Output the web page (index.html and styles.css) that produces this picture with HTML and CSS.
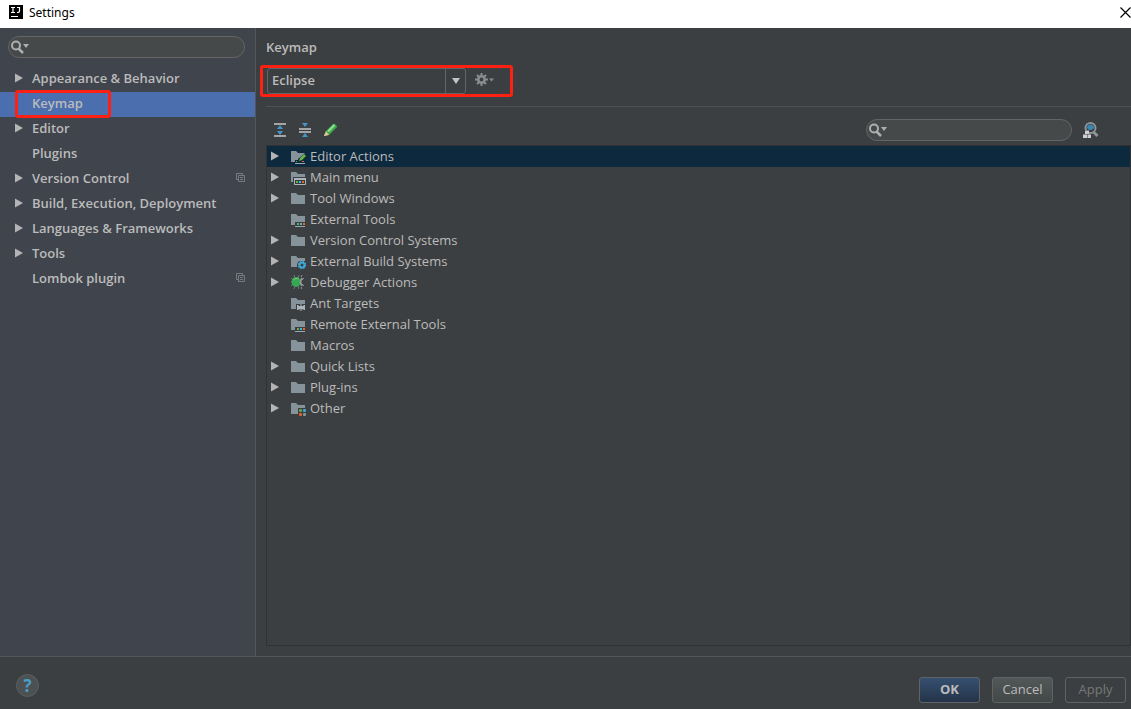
FILE: index.html
```html
<!DOCTYPE html>
<html lang="en">
<head>
<meta charset="utf-8">
<meta name="viewport" content="width=device-width, initial-scale=1">
<title>Settings</title>
<link rel="stylesheet" href="styles.css">
</head>
<body>
<svg class="defs" aria-hidden="true">
  <symbol id="arrow" viewBox="0 0 8 10"><path d="M0 0.500L8 5L0 9.500Z" fill="#b4b4b4"/></symbol>
  <symbol id="folder" viewBox="0 0 16 16"><path d="M1 3h5l2 2h7v9H1Z" fill="#87939a"/></symbol>
  <symbol id="folder-tools" viewBox="0 0 16 16"><path d="M1 3h5l2 2h7v6H5v3H1Z" fill="#87939a"/><path d="M7 12h2v2H7z" fill="#62b543"/><path d="M10 12h2v2h-2z" fill="#40b6e0"/><path d="M13 12h2v2h-2z" fill="#f26522"/><path d="M5 15h10v1H5z" fill="#9aa7b0"/></symbol>
  <symbol id="folder-edit" viewBox="0 0 16 16"><path d="M1 3h5l2 2h7L8 11v1H5v2H1Z" fill="#87939a"/><path d="M9 13l1-3 4-4 2 2-4 4Z" fill="#62b543"/><path d="M6 13h1v1H6z" fill="#62b543"/><path d="M12 13h2v1h-2z" fill="#f26522"/><path d="M5 15h10v1H5z" fill="#9aa7b0"/></symbol>
  <symbol id="folder-menu" viewBox="0 0 16 16"><path d="M1 3h5l2 2h7v3H3v5H1Z" fill="#87939a"/><path d="M4.500 9.500h11v6h-11Z" fill="#343a3d" stroke="#aab4ba"/><path d="M4 9h12v2H4z" fill="#aab4ba"/><path d="M6 12h2v2H6z" fill="#62b543"/><path d="M9 12h2v2H9z" fill="#40b6e0"/><path d="M12 12h2v2h-2z" fill="#f26522"/></symbol>
  <symbol id="folder-build" viewBox="0 0 16 16"><path d="M1 3h5l2 2h7v3H9l-2 3v3H1Z" fill="#87939a"/><circle cx="12" cy="12" r="2.500" fill="none" stroke="#3fa7d6" stroke-width="2"/><circle cx="12" cy="12" r="3.500" fill="none" stroke="#3fa7d6" stroke-width="1.500" stroke-dasharray="1.400 1.350"/></symbol>
  <symbol id="bug" viewBox="0 0 16 16"><path d="M4 1l1 3M9 1L8 4M1 4l2 2M1 8h2M1 12l2-2M4 15l1-3M9 15l-1-3" stroke="#6d7775" fill="none"/><ellipse cx="6" cy="8" rx="4.500" ry="5" fill="#35a853"/><path d="M3 6q3-3 6-1" stroke="#76c66f" fill="none"/><path d="M12 4q-3 4 0 8" stroke="#8e9696" stroke-width="2" fill="none"/><path d="M12 6l2-2M12 10l2 2M11 3l1-2M11 13l1 2" stroke="#8e9696"/></symbol>
  <symbol id="folder-ant" viewBox="0 0 16 16"><path d="M1 3h5l2 2h7v4H6v5H1Z" fill="#87939a"/><path d="M7 12.500h8" stroke="#aab4ba" stroke-width="3"/><path d="M8 10l1 5M11 9v7M14 10l-1 5M7 10l2 2M15 10l-2 2M7 15l2-2M15 15l-2-2" stroke="#aab4ba" fill="none"/></symbol>
  <symbol id="folder-other" viewBox="0 0 16 16"><path d="M1 3h5l2 2h7v3H8v6H1Z" fill="#87939a"/><rect x="9" y="9" width="3" height="3" rx="1" fill="#62a543"/><rect x="13" y="9" width="3" height="3" rx="1" fill="#3fa7d6"/><rect x="9" y="13" width="3" height="3" rx="1" fill="#e0602a"/><rect x="13" y="13" width="3" height="3" rx="1" fill="#87939a"/></symbol>
  <symbol id="search" viewBox="0 0 20 14"><circle cx="6" cy="5.500" r="4" fill="none" stroke="#afafaf" stroke-width="2"/><path d="M8.500 8.500L13 13" stroke="#afafaf" stroke-width="2.500"/><path d="M13 4h6l-3 4Z" fill="#afafaf"/></symbol>
  <symbol id="copy" viewBox="0 0 10 10"><path d="M2.500 6.500h-2v-6h6v2M2.500 2.500h6v6h-6ZM4 4.500h3M4 6.500h3" fill="none" stroke="#777b80"/></symbol>
</svg>

<header class="titlebar">
  <svg class="logo" viewBox="0 0 14 14" aria-hidden="true"><path d="M0 0h14v14H0z" fill="#000"/><path d="M2 2.500h4M4 2.500v5M2 7.500h4M8 2.500h3M10.500 2v4q0 1.500-2.500 1.500M2 11.500h7" stroke="#fff" stroke-width="1.200" fill="none"/></svg>
  <h1 class="title">Settings</h1>
  <button class="close" aria-label="Close"><svg viewBox="0 0 11 11"><path d="M0.500 0.500l10 10M10.500 0.500l-10 10" stroke="#000" stroke-width="1.200"/></svg></button>
</header>

<div class="content">
  <aside class="sidebar">
    <label class="search"><svg class="search-icon" aria-hidden="true"><use href="#search"/></svg><input class="search-input" type="text" aria-label="Search settings"></label>
    <nav class="nav">
      <a class="nav-item" href="#"><svg class="arrow"><use href="#arrow"/></svg><span>Appearance &amp; Behavior</span></a>
      <a class="nav-item selected" href="#" aria-current="page"><span class="arrow"></span><span>Keymap</span><span class="mark"></span></a>
      <a class="nav-item" href="#"><svg class="arrow"><use href="#arrow"/></svg><span>Editor</span></a>
      <a class="nav-item" href="#"><span class="arrow"></span><span>Plugins</span></a>
      <a class="nav-item" href="#"><svg class="arrow"><use href="#arrow"/></svg><span>Version Control</span><svg class="copy"><use href="#copy"/></svg></a>
      <a class="nav-item" href="#"><svg class="arrow"><use href="#arrow"/></svg><span>Build, Execution, Deployment</span></a>
      <a class="nav-item" href="#"><svg class="arrow"><use href="#arrow"/></svg><span>Languages &amp; Frameworks</span></a>
      <a class="nav-item" href="#"><svg class="arrow"><use href="#arrow"/></svg><span>Tools</span></a>
      <a class="nav-item" href="#"><span class="arrow"></span><span>Lombok plugin</span><svg class="copy"><use href="#copy"/></svg></a>
    </nav>
  </aside>

  <main class="main">
    <h2 class="heading"><label for="scheme">Keymap</label></h2>
    <div class="scheme">
      <div class="combo">
        <select class="combo-select" id="scheme"><option>Eclipse</option></select>
        <span class="combo-arrow"><svg viewBox="0 0 8 6" aria-hidden="true"><path d="M0 0h8L4 6Z" fill="#c4c4c4"/></svg></span>
      </div>
      <button class="icon-button" aria-label="Scheme actions"><svg class="gear" viewBox="0 0 20 14"><circle cx="6.500" cy="5.500" r="3.200" fill="none" stroke="#8b8b8b" stroke-width="2.600"/><path d="M6.500 -1v3M6.500 9v3M0 5.500h3M10 5.500h3M2 1l2 2M9 8l2 2M11 1L9 3M4 8l-2 2" stroke="#8b8b8b" stroke-width="2"/><path d="M14 4.500h5l-2.500 3Z" fill="#8b8b8b"/></svg></button>
      <span class="scheme-mark"></span>
    </div>
    <div class="toolbar">
      <button class="icon-button" aria-label="Expand all"><svg class="tool" viewBox="0 0 14 14"><path d="M1 0h12v2H1zM1 12h12v2H1z" fill="#a2a4a5"/><path d="M7 2l3 4H4ZM7 12l3-4H4Z" fill="#4596c8"/></svg></button>
      <button class="icon-button" aria-label="Collapse all"><svg class="tool" viewBox="0 0 14 14"><path d="M1 5h12v2H1zM1 8h12v2H1z" fill="#a2a4a5"/><path d="M4 0h6L7 4ZM4 14h6l-3-4Z" fill="#4596c8"/></svg></button>
      <button class="icon-button" aria-label="Edit shortcuts"><svg class="tool" viewBox="0 0 14 14"><path d="M1 13l2-5 7-7q1-1 3 1t0 3l-7 7Z" fill="#3fa64c"/><path d="M4 8l7-7 1 2-6 6Z" fill="#8ede91"/><path d="M1 13l2-5 3 4Z" fill="#eac08c"/><path d="M1 13l1-2 1 1Z" fill="#ccc"/></svg></button>
      <label class="search filter"><svg class="search-icon" aria-hidden="true"><use href="#search"/></svg><input class="search-input" type="text" aria-label="Filter actions"></label>
      <button class="icon-button" aria-label="Find by shortcut"><svg class="find" viewBox="0 0 16 16"><circle cx="7.500" cy="6" r="5" fill="#353b3e" stroke="#8f9497" stroke-width="2"/><path d="M4 6a3.500 3.500 0 0 1 7 0l-2 2h-3Z" fill="#3b86ad"/><path d="M10.500 10l4 4" stroke="#8f9497" stroke-width="3"/><path d="M2 8h4v4H2zM0 12h9v4H0z" fill="#3c3f41"/><path d="M2 8.500h4v3.500H2zM0 12.500h4v3.500H0zM4.500 12.500h3.500v3.500h-3.500z" fill="#cfcfcf"/></svg></button>
    </div>
    <ul class="tree" role="tree">
      <li class="row active" role="treeitem" aria-selected="true"><svg class="arrow"><use href="#arrow"/></svg><svg class="icon"><use href="#folder-edit"/></svg>Editor Actions</li>
      <li class="row" role="treeitem"><svg class="arrow"><use href="#arrow"/></svg><svg class="icon"><use href="#folder-menu"/></svg>Main menu</li>
      <li class="row" role="treeitem"><svg class="arrow"><use href="#arrow"/></svg><svg class="icon"><use href="#folder"/></svg>Tool Windows</li>
      <li class="row" role="treeitem"><span class="arrow"></span><svg class="icon"><use href="#folder-tools"/></svg>External Tools</li>
      <li class="row" role="treeitem"><svg class="arrow"><use href="#arrow"/></svg><svg class="icon"><use href="#folder"/></svg>Version Control Systems</li>
      <li class="row" role="treeitem"><svg class="arrow"><use href="#arrow"/></svg><svg class="icon"><use href="#folder-build"/></svg>External Build Systems</li>
      <li class="row" role="treeitem"><svg class="arrow"><use href="#arrow"/></svg><svg class="icon"><use href="#bug"/></svg>Debugger Actions</li>
      <li class="row" role="treeitem"><span class="arrow"></span><svg class="icon"><use href="#folder-ant"/></svg>Ant Targets</li>
      <li class="row" role="treeitem"><span class="arrow"></span><svg class="icon"><use href="#folder-tools"/></svg>Remote External Tools</li>
      <li class="row" role="treeitem"><span class="arrow"></span><svg class="icon"><use href="#folder"/></svg>Macros</li>
      <li class="row" role="treeitem"><svg class="arrow"><use href="#arrow"/></svg><svg class="icon"><use href="#folder"/></svg>Quick Lists</li>
      <li class="row" role="treeitem"><svg class="arrow"><use href="#arrow"/></svg><svg class="icon"><use href="#folder"/></svg>Plug-ins</li>
      <li class="row" role="treeitem"><svg class="arrow"><use href="#arrow"/></svg><svg class="icon"><use href="#folder-other"/></svg>Other</li>
    </ul>
  </main>
</div>

<footer class="footer">
  <button class="help" aria-label="Help">?</button>
  <div class="actions">
    <button class="button primary">OK</button>
    <button class="button">Cancel</button>
    <button class="button" disabled>Apply</button>
  </div>
</footer>
</body>
</html>
```

FILE: styles.css
```css
* { box-sizing: border-box; }

body {
  margin: 0;
  min-height: 100vh;
  display: flex;
  flex-direction: column;
  background: #3c3f41;
  color: #bbbbbb;
  font: 13px/20px "Open Sans", "Noto Sans", sans-serif;
}

svg { display: block; flex: none; }
button, input, select { font: inherit; color: inherit; }
.defs { position: absolute; width: 0; height: 0; }

.titlebar {
  display: flex;
  align-items: center;
  height: 28px;
  padding: 0 0 4px 9px;
  background: #ffffff;
  color: #000000;
}
.logo { width: 14px; height: 14px; }
.title {
  margin: 0 auto 0 6px;
  padding-top: 2px;
  font-family: "Noto Sans", sans-serif;
  font-size: 12px;
  font-weight: 400;
}
.close { padding: 0; border: 0; background: none; }
.close svg { width: 11px; height: 11px; }

.content { flex: 1; display: flex; }

.sidebar {
  width: 256px;
  flex: none;
  padding-top: 8px;
  background: #40444d;
  border-right: 1px solid #555555;
}
.search {
  display: flex;
  align-items: center;
  height: 22px;
  padding: 0 10px 0 1px;
  border: 1px solid #646464;
  border-radius: 11px;
  background: #45494a;
}
.sidebar .search { margin: 0 10px 0 8px; }
.search-icon { width: 20px; height: 14px; }
.search-input {
  flex: 1;
  min-width: 0;
  padding: 0;
  border: 0;
  outline: 0;
  background: transparent;
}

.nav { margin-top: 9px; }
.nav-item {
  position: relative;
  display: flex;
  align-items: center;
  height: 25px;
  padding: 0 9px 3px 15px;
  color: inherit;
  font-weight: 600;
  text-decoration: none;
}
.nav-item .arrow { margin-right: 9px; }
.selected { background: #4b6eaf; }
.arrow { width: 8px; height: 10px; flex: none; }
.copy { width: 10px; height: 10px; margin-left: auto; }
.mark {
  position: absolute;
  left: 15px;
  top: -2px;
  width: 96px;
  height: 28px;
  border: 3px solid #ff2014;
  border-radius: 3px;
}

.main {
  flex: 1;
  min-width: 0;
  display: flex;
  flex-direction: column;
  padding: 9px 0 10px 10px;
}
.heading { margin: 0; font-size: 13px; font-weight: 600; }
.scheme {
  position: relative;
  display: flex;
  align-items: center;
  gap: 9px;
  padding: 11px 0 12px 1px;
  border-bottom: 1px solid #515151;
}
.combo { position: relative; width: 199px; }
.combo-select {
  display: block;
  width: 100%;
  height: 26px;
  padding: 0 24px 2px 4px;
  border: 1px solid #646464;
  border-radius: 3px;
  background: #3c3f41;
  font-weight: 600;
  appearance: none;
}
.combo-arrow {
  position: absolute;
  top: 1px;
  right: 1px;
  bottom: 1px;
  width: 20px;
  display: grid;
  place-items: center;
  border-left: 1px solid #646464;
  pointer-events: none;
}
.combo-arrow svg { width: 8px; height: 6px; }
.scheme-mark {
  position: absolute;
  left: -6px;
  top: 8px;
  width: 253px;
  height: 32px;
  border: 3px solid #ff2014;
  border-radius: 3px;
  pointer-events: none;
}
.icon-button { padding: 0; border: 0; background: none; }
.gear { width: 20px; height: 14px; overflow: visible; }

.toolbar {
  display: flex;
  align-items: center;
  gap: 11px;
  padding: 12px 32px 4px 7px;
}
.tool { width: 14px; height: 14px; }
.filter { width: 206px; margin-left: auto; }
.find { width: 16px; height: 16px; }

.tree {
  flex: 1;
  margin: 0;
  padding: 0;
  border: 1px solid #303233;
  list-style: none;
}
.row {
  display: flex;
  align-items: center;
  height: 21px;
  padding: 0 0 1px 4px;
}
.row .icon { width: 16px; height: 16px; margin: 0 4px 0 11px; }
.active { background: #0d293e; }

.footer {
  display: flex;
  align-items: center;
  justify-content: space-between;
  height: 53px;
  padding: 13px 5px 0 16px;
  border-top: 1px solid #555555;
}
.help {
  width: 23px;
  height: 23px;
  margin-bottom: 8px;
  padding: 0;
  border: 1px solid #5c6061;
  border-radius: 50%;
  background: #4c5152;
  color: #4a9cc9;
  font-size: 17px;
  font-weight: 700;
  line-height: 20px;
}
.actions { display: flex; gap: 12px; }
.button {
  width: 61px;
  height: 26px;
  padding: 0 0 1px;
  border: 1px solid #5f6363;
  border-radius: 3px;
  background: linear-gradient(#525758, #424748);
}
.primary { background: linear-gradient(#365070, #243349); font-weight: 700; }
.button:disabled { background: none; color: #777777; }
```
